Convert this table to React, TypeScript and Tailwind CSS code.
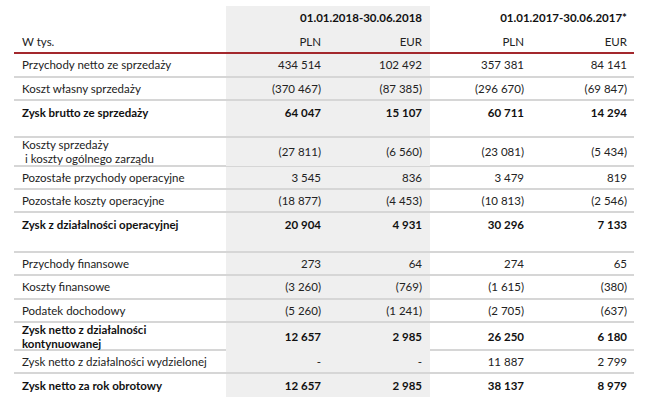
type Row = {
  label: string[];
  values: string[];
  bold?: boolean;
  h: string;
  border?: boolean;
  spacer?: string;
};

const rows: Row[] = [
  { label: ["Przychody netto ze sprzedaży"], values: ["434 514", "102 492", "357 381", "84 141"], h: "h-[24px]", border: true },
  { label: ["Koszt własny sprzedaży"], values: ["(370 467)", "(87 385)", "(296 670)", "(69 847)"], h: "h-[23px]", border: true },
  { label: ["Zysk brutto ze sprzedaży"], values: ["64 047", "15 107", "60 711", "14 294"], bold: true, h: "h-[23px]", spacer: "h-[14px]" },
  { label: ["Koszty sprzedaży", "\u00a0i koszty ogólnego zarządu"], values: ["(27 811)", "(6 560)", "(23 081)", "(5 434)"], h: "h-[29px]", border: true },
  { label: ["Pozostałe przychody operacyjne"], values: ["3 545", "836", "3 479", "819"], h: "h-[23px]", border: true },
  { label: ["Pozostałe koszty operacyjne"], values: ["(18 877)", "(4 453)", "(10 813)", "(2 546)"], h: "h-[23px]", border: true },
  { label: ["Zysk z działalności operacyjnej"], values: ["20 904", "4 931", "30 296", "7 133"], bold: true, h: "h-[23px]", spacer: "h-[17px]" },
  { label: ["Przychody finansowe"], values: ["273", "64", "274", "65"], h: "h-[23px]", border: true },
  { label: ["Koszty finansowe"], values: ["(3 260)", "(769)", "(1 615)", "(380)"], h: "h-[24px]", border: true },
  { label: ["Podatek dochodowy"], values: ["(5 260)", "(1 241)", "(2 705)", "(637)"], h: "h-[23px]", border: true },
  { label: ["Zysk netto z działalności", "kontynuowanej"], values: ["12 657", "2 985", "26 250", "6 180"], bold: true, h: "h-[28px]", border: true },
  { label: ["Zysk netto z działalności wydzielonej"], values: ["-", "-", "11 887", "2 799"], h: "h-[23px]", border: true },
  { label: ["Zysk netto za rok obrotowy"], values: ["12 657", "2 985", "38 137", "8 979"], bold: true, h: "h-[23px]" },
];

const grid = "grid grid-cols-[212px_102px_102px_102px_102px]";

export default function App() {
  return (
    <div className="h-[400px] w-[645px] bg-white pl-[14px] pt-[6px] text-[11.5px] text-[#222]" style={{ fontFamily: "Lato, 'Liberation Sans', sans-serif" }}>
      <div className="w-[620px]">
        {/* period header */}
        <div className={`${grid} h-[24px] font-bold text-[#111]`}>
          <div />
          <div className="col-span-2 flex items-center justify-end bg-[#efefef] pr-2">01.01.2018-30.06.2018</div>
          <div className="col-span-2 flex items-center justify-end pr-[7px]">01.01.2017-30.06.2017*</div>
        </div>
        <div className={`${grid} h-[24px] border-b-2 border-[#a3282d]`}>
          <div className="flex items-center pl-2 pt-px">W tys.</div>
          <div className="flex items-center justify-end bg-[#efefef] pr-[7px] pt-px">PLN</div>
          <div className="flex items-center justify-end bg-[#efefef] pr-2 pt-px">EUR</div>
          <div className="flex items-center justify-end pr-2 pt-px">PLN</div>
          <div className="flex items-center justify-end pr-[7px] pt-px">EUR</div>
        </div>

        {rows.map((r, i) => (
          <div key={i}>
            <div className={`${grid} ${r.h} ${r.border ? "border-b-2 border-[#d6d6d6]" : ""} ${r.bold ? "font-bold text-[#111]" : ""}`}>
              <div className="flex flex-col justify-center pl-2 leading-[14px]">
                {r.label.map((l, j) => (
                  <span key={j}>{l}</span>
                ))}
              </div>
              <div className="flex items-center justify-end bg-[#efefef] pr-[7px]">{r.values[0]}</div>
              <div className="flex items-center justify-end bg-[#efefef] pr-2">{r.values[1]}</div>
              <div className="flex items-center justify-end pr-2">{r.values[2]}</div>
              <div className="flex items-center justify-end pr-[7px]">{r.values[3]}</div>
            </div>
            {r.spacer && (
              <div className={`${grid} ${r.spacer} border-b-2 border-[#d6d6d6]`}>
                <div />
                <div className="col-span-2 bg-[#efefef]" />
              </div>
            )}
          </div>
        ))}
      </div>
    </div>
  );
}
